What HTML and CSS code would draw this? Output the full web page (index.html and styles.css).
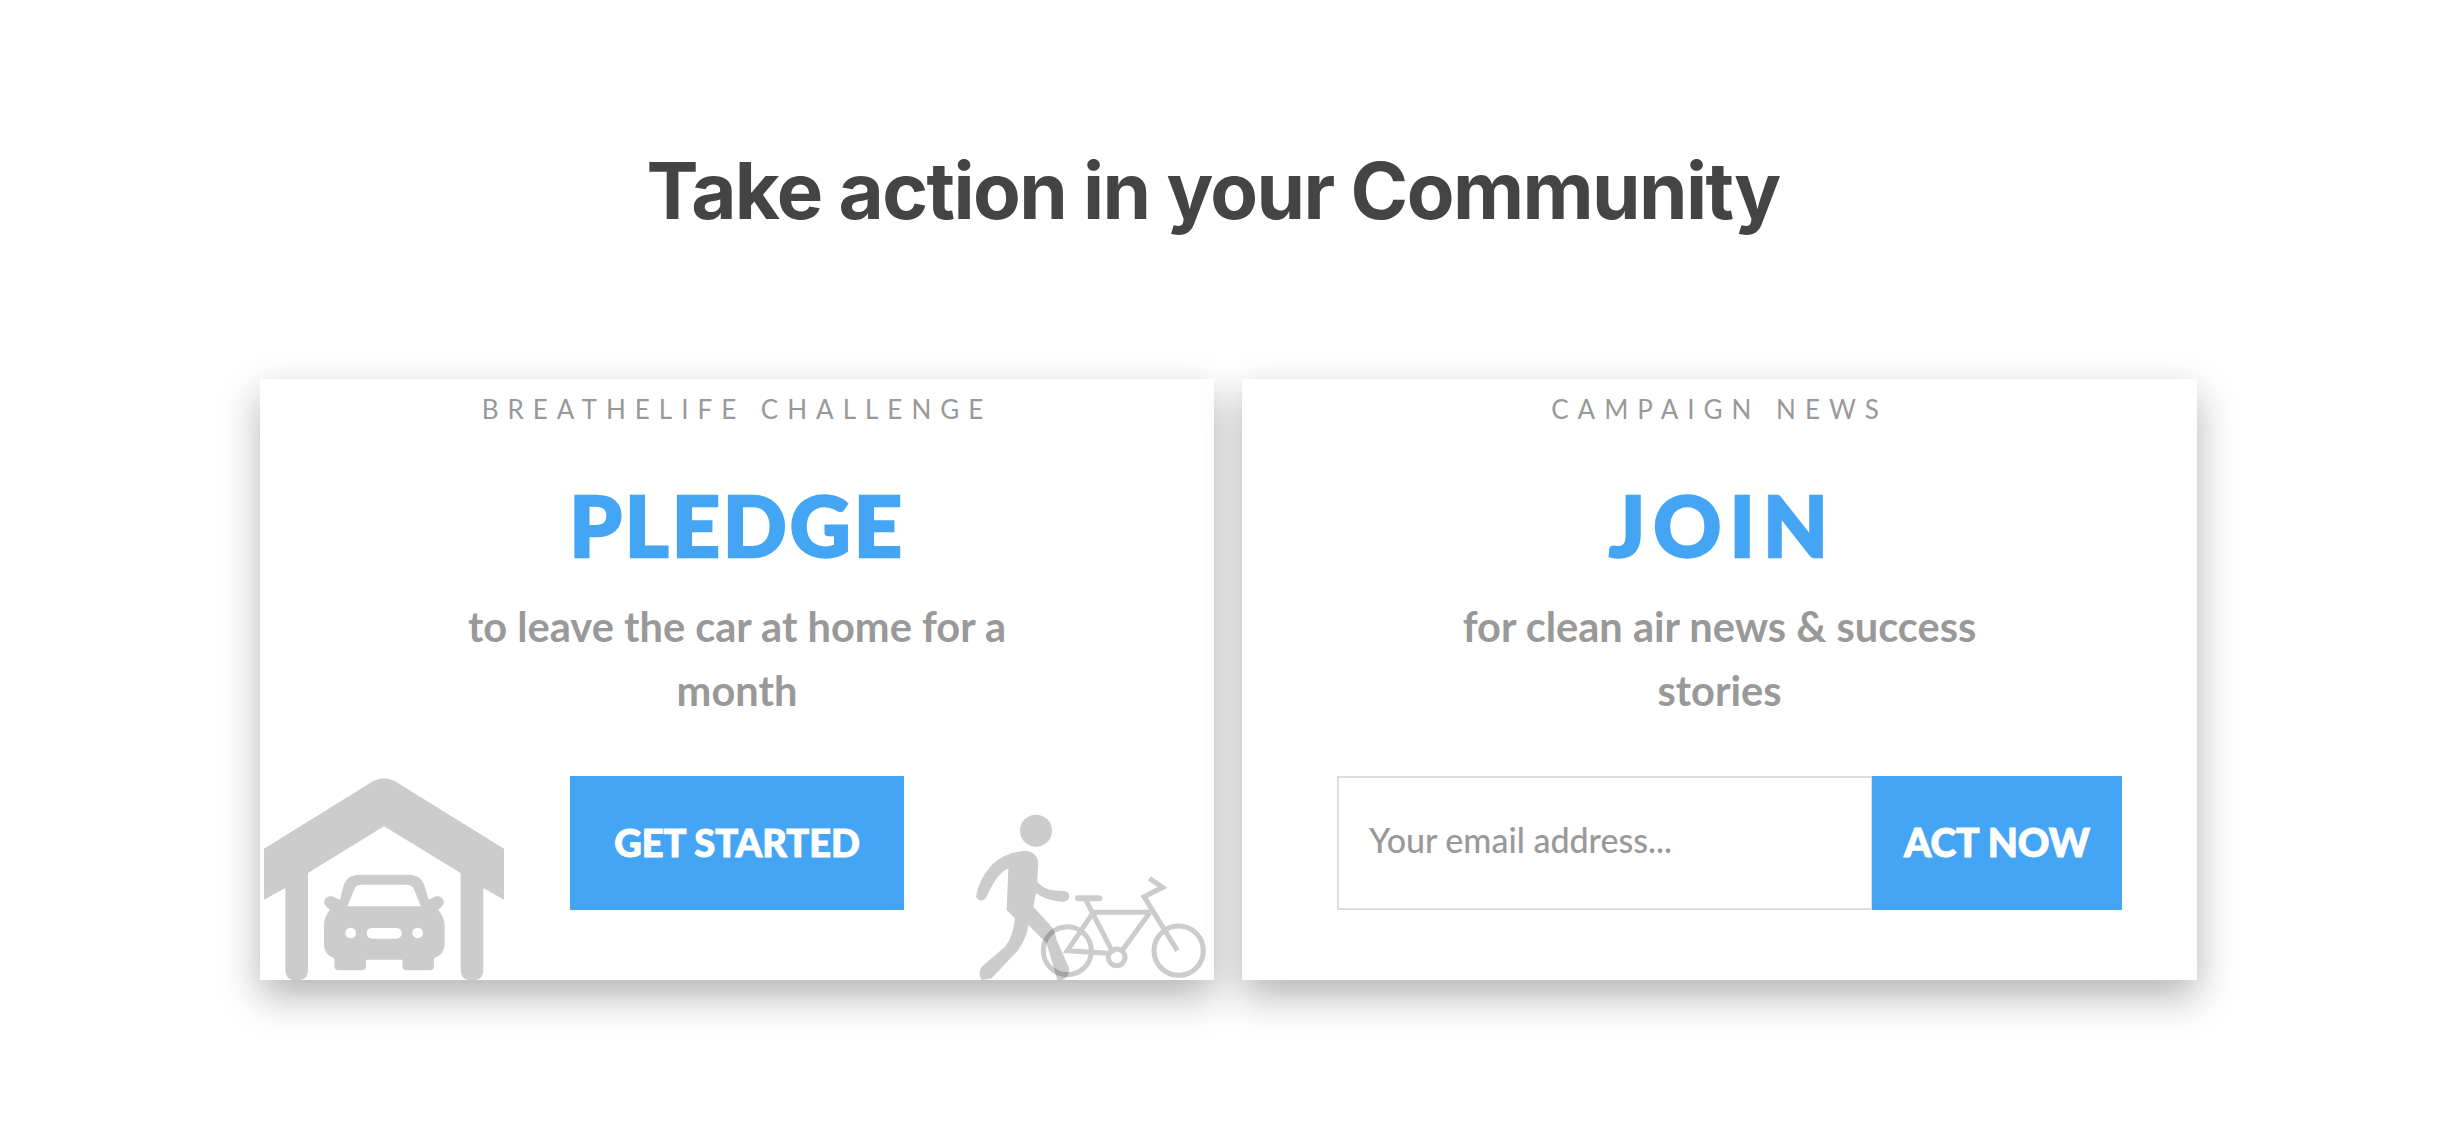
FILE: index.html
```html
<!DOCTYPE html>
<html lang="en">
<head>
<meta charset="utf-8">
<title>Take action in your Community</title>
<link rel="stylesheet" href="styles.css">
</head>
<body>
<section class="section">
  <h1 class="title">Take action in your Community</h1>
  <div class="cards">
    <article class="card">
      <svg class="art art-garage" viewBox="60 110 740 610" aria-hidden="true">
        <path class="art-fill" fill-rule="evenodd" d="M72 325 L400 122 Q432 105 464 122 L792 325 L792 478 L730 443 L730 688 Q730 720 696 720 Q662 720 662 688 L662 398 L432 258 L204 398 L204 688 Q204 720 170 720 Q136 720 136 688 L136 443 L72 478 Z"/>
        <path class="art-fill" fill-rule="evenodd" d="M300 478 L312 432 Q322 403 360 403 L505 403 Q542 403 552 432 L566 478 L590 467 Q608 468 612 484 Q610 498 594 508 Q614 530 614 555 L614 615 Q610 645 582 654 L582 676 Q582 690 568 690 L500 690 Q487 690 487 676 L487 658 L378 658 L378 676 Q378 690 364 690 L297 690 Q283 690 283 676 L283 654 Q254 645 252 615 L252 555 Q252 530 270 508 Q254 498 252 484 Q256 468 274 467 Z M322 498 L543 498 L520 442 Q514 433 498 433 L365 433 Q350 433 345 442 Z M332 562 A16 16 0 1 0 332.1 562 Z M533 562 A16 16 0 1 0 533.1 562 Z M396 563 Q380 564 380 579 Q380 594 396 595 L470 595 Q485 594 485 579 Q485 564 470 563 Z"/>
      </svg>
      <svg class="art art-walker" viewBox="60 60 732 510" aria-hidden="true">
        <g class="art-layer">
          <circle cx="258" cy="122" r="48"/>
          <path d="M225 183 Q262 185 265 220 L262 275 Q285 305 340 303 Q360 305 358 322 Q352 338 335 335 Q290 332 258 310 L250 350 L300 405 Q315 420 320 450 L358 535 Q358 565 335 570 L322 570 L290 460 L235 405 Q232 440 205 480 L125 565 L95 570 Q82 550 95 530 L165 470 Q190 440 195 385 L170 360 L175 235 Q140 250 108 325 Q90 340 78 320 Q85 270 125 225 Q165 185 225 183 Z"/>
        </g>
        <g class="art-layer art-bike">
          <circle cx="352" cy="482" r="72"/>
          <circle cx="686" cy="482" r="74"/>
          <circle cx="500" cy="502" r="25"/>
          <path d="M430 367 L600 367 M405 325 L490 490 M430 367 L352 482 L476 490 M600 367 L516 482 M682 482 L582 320 L638 292 L598 265"/>
          <path class="art-saddle" d="M384 325 L448 325"/>
        </g>
      </svg>
      <p class="eyebrow">BREATHELIFE CHALLENGE</p>
      <h2 class="verb">PLEDGE</h2>
      <p class="sub">to leave the car at home for a<br>month</p>
      <div class="action"><a class="btn btn-start" href="#">GET STARTED</a></div>
    </article>
    <article class="card">
      <p class="eyebrow">CAMPAIGN NEWS</p>
      <h2 class="verb verb-wide">JOIN</h2>
      <p class="sub">for clean air news &amp; success<br>stories</p>
      <form class="action signup">
        <input class="email" type="text" placeholder="Your email address...">
        <button class="btn btn-act" type="button">ACT NOW</button>
      </form>
    </article>
  </div>
</section>
</body>
</html>
```
FILE: styles.css
```css
* { box-sizing: border-box; }
html, body { margin: 0; background: #fff; }
body { height: 1134px; overflow: hidden; font-family: "Lato", "Liberation Sans", sans-serif; }
.section { padding: 143px 241px 0 260px; }
.title {
  margin: 0 31px 0 0;
  font-family: "Inter", "Liberation Sans", sans-serif;
  font-size: 78px;
  line-height: 96px;
  font-weight: 700;
  letter-spacing: -1.6px;
  color: #444;
  text-align: center;
}
.cards { display: grid; grid-template-columns: 954px 955px; gap: 28px; margin-top: 140px; }
.card {
  position: relative;
  height: 601px;
  background: #fff;
  box-shadow: 0 16px 38px rgba(0,0,0,.3);
  text-align: center;
  overflow: visible;
}
.eyebrow {
  margin: 0;
  padding-top: 14px;
  font-size: 26px;
  line-height: 32px;
  letter-spacing: 9px;
  color: #999;
}
.verb {
  margin: 50px 0 0;
  font-size: 84px;
  line-height: 100px;
  font-weight: 900;
  letter-spacing: 3px;
  -webkit-text-stroke: 2.5px #45a5f5;
  color: #45a5f5;
}
.verb-wide { letter-spacing: 8px; padding-left: 6px; }
.sub {
  margin: 19px 0 0;
  font-size: 41.6px;
  line-height: 64px;
  font-weight: 700;
  color: #999;
}
.action { display: flex; justify-content: center; margin-top: 54px; position: relative; }
.signup { padding-left: 20px; }
.btn {
  display: flex;
  align-items: center;
  justify-content: center;
  height: 134px;
  padding-bottom: 2px;
  border: 0;
  background: #45a5f5;
  color: #fff;
  font-family: "Lato", "Liberation Sans", sans-serif;
  font-weight: 900;
  font-size: 38px;
  -webkit-text-stroke: 1px #fff;
  text-decoration: none;
}
.btn-start { width: 334px; }
.btn-act { width: 250px; font-size: 39px; padding-bottom: 3px; }
.email {
  width: 535px;
  height: 134px;
  padding: 0 30px 7px;
  border: 2px solid #ddd;
  border-right-width: 1px;
  background: #fff;
  font-family: "Lato", "Liberation Sans", sans-serif;
  font-size: 34px;
  font-weight: 500;
  color: #999;
  outline: 0;
  border-radius: 0;
}
.email::placeholder { color: #999; opacity: 1; }
.art { position: absolute; bottom: 0; display: block; filter: blur(.6px); }
.art-garage { left: 0; width: 246.67px; height: 203.33px; }
.art-walker { right: 0; width: 244px; height: 170px; }
.art-fill { fill: #ccc; }
.art-layer { fill: #000; opacity: .2; }
.art-bike { fill: none; stroke: #000; stroke-width: 15; }
.art-saddle { stroke-width: 18; stroke-linecap: round; }
```
